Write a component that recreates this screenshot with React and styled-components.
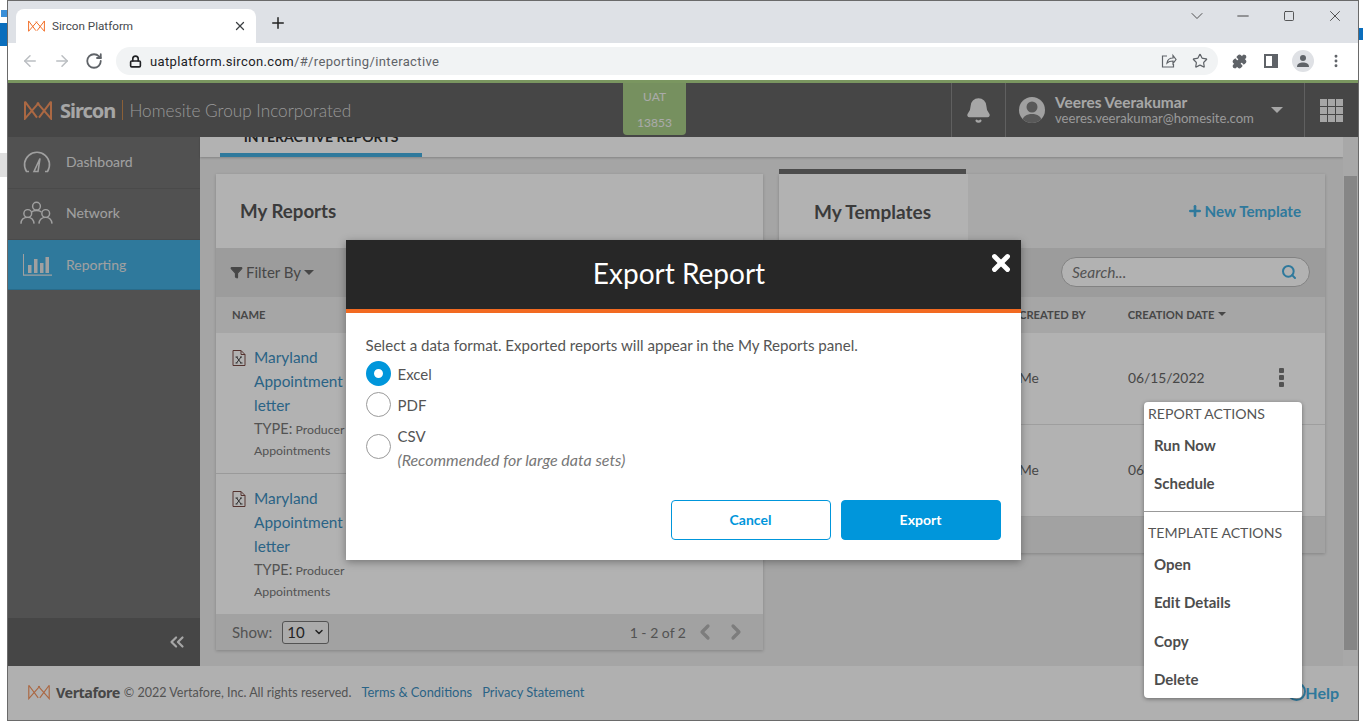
import React from "react";
import styled, { createGlobalStyle } from "styled-components";
import { ArrowLeft, ArrowRight, RotateCw, Lock, Star, Puzzle, MoreVertical, X, Plus, ChevronDown, Minus, Square, Search, ChevronLeft, ChevronRight, ChevronsLeft, Filter, Bell } from "lucide-react";

const Global = createGlobalStyle`
  html, body { margin: 0; padding: 0; background: #fff; overflow: hidden; }
  body { font-family: "Lato", "Noto Sans", sans-serif; }
  * { box-sizing: border-box; }
`;

const Desktop = styled.div`
  position: relative;
  width: 1366px;
  height: 728px;
  padding-left: 7px;
  overflow: hidden;
  background: #fff;
`;
const DesktopBit = styled.div`
  position: absolute;
  left: ${p => p.$x}px;
  top: ${p => p.$y}px;
  width: ${p => p.$w}px;
  height: ${p => p.$h}px;
  background: ${p => p.$c};
`;
const Win = styled.div`
  position: relative;
  width: 1352px;
  height: 721px;
  border: 1px solid #6a6a6a;
  display: flex;
  flex-direction: column;
  overflow: hidden;
  background: #fff;
`;
const TabStrip = styled.div`
  height: 42px;
  flex: none;
  background: #dee1e6;
  display: flex;
  align-items: flex-end;
  padding-left: 8px;
  color: #3c4043;
`;
const Tab = styled.div`
  width: 240px;
  height: 34px;
  background: #fff;
  border-radius: 8px 8px 0 0;
  display: flex;
  align-items: center;
  padding: 0 9px 0 12px;
  gap: 7px;
  font: 11.7px "Roboto", sans-serif;
  color: #45494d;
`;
const TabTitle = styled.span`
  flex: 1;
`;
const NewTab = styled.div`
  margin: 0 0 6px 13px;
  display: flex;
  align-items: center;
  height: 28px;
`;
const WinControls = styled.div`
  margin-left: auto;
  align-self: flex-start;
  display: flex;
  align-items: center;
  height: 30px;
  color: #333;
`;
const WinBtn = styled.div`
  width: 46px;
  display: flex;
  justify-content: center;
`;
const Toolbar = styled.div`
  height: 37px;
  flex: none;
  background: #fff;
  display: flex;
  align-items: center;
  padding: 0 8px 1px 13px;
  color: #5f6368;
`;
const NavIcons = styled.div`
  display: flex;
  align-items: center;
  gap: 14px;
  margin-right: 13px;
`;
const Omni = styled.div`
  width: 1102px;
  height: 28px;
  border-radius: 14px;
  background: #f1f3f4;
  display: flex;
  align-items: center;
  padding: 0 10px 0 13px;
  gap: 8px;
  font: 13px "Roboto", sans-serif;
  letter-spacing: .36px;
  color: #202124;
`;
const UrlHost = styled.span`
  color: #202124;
`;
const UrlPath = styled.span`
  color: #5f6368;
`;
const OmniRight = styled.div`
  margin-left: auto;
  display: flex;
  gap: 15px;
  align-items: center;
`;
const ExtIcons = styled.div`
  display: flex;
  align-items: center;
  gap: 14px;
  margin-left: 14px;
  color: #5f6368;
`;
const PuzzleIcon = styled(Puzzle)`
  margin-right: 3px;
`;
const ProfileDot = styled.div`
  width: 22px;
  height: 22px;
  border-radius: 50%;
  background: #dfe1e5;
  display: flex;
  align-items: center;
  justify-content: center;
`;
const GreenLine = styled.div`
  height: 3px;
  flex: none;
  background: #7a9660;
`;
const AppArea = styled.div`
  position: relative;
  flex: 1;
  min-height: 0;
  display: flex;
  flex-direction: column;
  overflow: hidden;
`;
const AppHeader = styled.header`
  position: relative;
  height: 54px;
  flex: none;
  background: #656565;
  display: flex;
  align-items: stretch;
  padding-left: 16px;
  color: #ddd;
`;
const Brand = styled.div`
  display: flex;
  align-items: center;
  gap: 5px;
  font-size: 17.2px;
  font-weight: 300;
  color: #d8d8d8;
`;
const BrandName = styled.span`
  font: 700 20px "Noto Sans", sans-serif;
  letter-spacing: -1px;
  color: #eee;
  margin-left: 3px;
`;
const BrandSep = styled.span`
  width: 1px;
  height: 20px;
  background: #c88a50;
  margin: 0 1px 0 2px;
`;
const UatBadge = styled.div`
  position: absolute;
  left: 615px;
  top: 0;
  width: 63px;
  height: 52px;
  background: #aacf88;
  border-radius: 0 0 4px 4px;
  display: flex;
  flex-direction: column;
  align-items: center;
  justify-content: space-between;
  padding: 6px 0 5px;
  font-size: 12px;
  color: #f4f4f4;
`;
const HeaderRight = styled.div`
  margin-left: auto;
  display: flex;
  align-items: stretch;
`;
const HeaderCell = styled.div`
  border-left: 1px solid #8a8a8a;
  display: flex;
  align-items: center;
  width: ${p => p.$w}px;
  justify-content: ${p => p.$center ? "center" : "flex-start"};
  padding-left: ${p => p.$pl || 0}px;
`;
const Avatar = styled.div`
  width: 26px;
  height: 26px;
  flex: none;
  border-radius: 50%;
  background: #e6e6e6;
  overflow: hidden;
`;
const UserInfo = styled.div`
  margin-left: 10px;
  display: flex;
  flex-direction: column;
  line-height: 16px;
`;
const UserName = styled.div`
  font-size: 15.4px;
  font-weight: 700;
  color: #f0f0f0;
`;
const UserMail = styled.div`
  font-size: 13.1px;
  color: #dcdcdc;
`;
const Caret = styled.span`
  display: inline-block;
  width: 0;
  height: 0;
  border-left: ${p => p.$s || 4}px solid transparent;
  border-right: ${p => p.$s || 4}px solid transparent;
  border-top: ${p => p.$s || 4}px solid ${p => p.$c || "#666"};
  margin-left: ${p => p.$m ?? 3}px;
`;
const Grid9 = styled.div`
  display: grid;
  grid-template-columns: repeat(3, 7px);
  grid-auto-rows: 7px;
  gap: 1px;
`;
const GridDot = styled.div`
  background: #eee;
`;
const Body = styled.div`
  flex: 1;
  min-height: 0;
  display: flex;
`;
const Sidebar = styled.nav`
  width: 192px;
  flex: none;
  background: #757575;
  display: flex;
  flex-direction: column;
`;
const NavItem = styled.div`
  height: ${p => p.$h}px;
  display: flex;
  align-items: center;
  padding: 0 0 ${p => p.$pb || 0}px 12px;
  gap: 13px;
  font-size: 14px;
  color: #e6e6e6;
  background: ${p => p.$active ? "#44aee0" : "transparent"};
  border-bottom: 1px solid ${p => p.$active ? "#3c9ac6" : "#6a6a6a"};
`;
const NavIconBox = styled.div`
  width: 33px;
  display: flex;
  justify-content: center;
  flex: none;
`;
const Collapse = styled.div`
  margin-top: auto;
  height: 48px;
  background: #656565;
  display: flex;
  align-items: center;
  justify-content: flex-end;
  padding-right: 12px;
  color: #eee;
`;
const Content = styled.main`
  flex: 1;
  min-width: 0;
  display: flex;
  background: #ececec;
`;
const ContentCol = styled.div`
  flex: 1;
  min-width: 0;
  display: flex;
  flex-direction: column;
`;
const Tabs = styled.div`
  height: 20px;
  flex: none;
  background: #fff;
  padding-left: 20px;
  display: flex;
  box-shadow: 0 1px 2px rgba(0,0,0,.2);
`;
const ActiveTab = styled.div`
  width: 202px;
  height: 20px;
  border-bottom: 4px solid #44aee0;
  overflow: hidden;
  display: flex;
  align-items: flex-end;
  justify-content: center;
  padding-bottom: 8px;
  font-size: 14px;
  font-weight: 700;
  line-height: 16px;
  color: #333;
`;
const Panels = styled.div`
  display: flex;
  gap: 16px;
  align-items: flex-start;
  padding: 17px 0 0 16px;
`;
const Card = styled.section`
  width: ${p => p.$w}px;
  background: #fff;
  box-shadow: 0 1px 3px rgba(0,0,0,.2);
  position: relative;
  flex: none;
`;
const CardHead = styled.div`
  height: 74px;
  display: flex;
  align-items: stretch;
  background: ${p => p.$tint ? "#f3f3f3" : "#fff"};
`;
const CardTitle = styled.h2`
  margin: 0;
  font-size: 18.7px;
  font-weight: 700;
  color: #555;
  display: flex;
  align-items: center;
  padding: 0 24px;
  line-height: 1;
`;
const TemplateTab = styled(CardTitle)`
  position: relative;
  width: 189px;
  font-size: 19px;
  padding: 0 0 0 35px;
  background: #fff;
  &::before {
    content: "";
    position: absolute;
    left: 0;
    right: 2px;
    top: -5px;
    height: 5px;
    background: #6d6d6d;
  }
`;
const NewTemplate = styled.div`
  margin-left: auto;
  display: flex;
  align-items: center;
  gap: 2px;
  padding: 0 24px 1px 0;
  font-size: 15.2px;
  font-weight: 700;
  color: #44aee0;
`;
const FilterBar = styled.div`
  height: 49px;
  background: #e0e0e0;
  display: flex;
  align-items: center;
  padding: 0 15px 1px 14px;
  font-size: 15px;
  color: #666;
  gap: 3px;
`;
const SearchBox = styled.div`
  margin-left: auto;
  width: 249px;
  height: 30px;
  border: 1px solid #bbb;
  border-radius: 15px;
  background: #fff;
  display: flex;
  align-items: center;
  justify-content: space-between;
  padding: 0 12px 0 10px;
  font-size: 15.5px;
  font-style: italic;
  color: #777;
`;
const THead = styled.div`
  height: 36px;
  background: #eeeeee;
  display: flex;
  align-items: center;
  padding-bottom: 2px;
  font-size: 11.2px;
  font-weight: 700;
  color: #666;
`;
const Th = styled.div`
  margin-left: ${p => p.$ml || 0}px;
  display: flex;
  align-items: center;
  white-space: nowrap;
`;
const ReportRow = styled.div`
  height: ${p => p.$h}px;
  display: flex;
  padding: 12px 0 0 16px;
  border-bottom: ${p => p.$last ? "none" : "1px solid #ddd"};
  gap: 8px;
`;
const DocIcon = styled.div`
  flex: none;
  margin-top: 5px;
`;
const ReportText = styled.div`
  width: 95px;
`;
const ReportName = styled.div`
  font-size: 15.4px;
  line-height: 24px;
  color: #3d8fc0;
`;
const ReportType = styled.div`
  margin-top: 1px;
  line-height: 21px;
  color: #777;
  font-size: 12.3px;
`;
const TypeLabel = styled.span`
  font-size: 14.5px;
`;
const TemplateRow = styled.div`
  height: ${p => p.$h}px;
  display: flex;
  align-items: center;
  padding: 0 0 2px 240px;
  border-bottom: 1px solid #e2e2e2;
  font-size: 13.8px;
  color: #666;
`;
const DateCell = styled.div`
  margin-left: 89px;
  width: 151px;
`;
const Dots = styled.div`
  display: flex;
  flex-direction: column;
  gap: 2px;
`;
const Dot = styled.div`
  width: 5px;
  height: 5px;
  background: #777;
  border-radius: 1px;
`;
const CardFoot = styled.div`
  height: 36px;
  background: #e8e8e8;
  display: flex;
  align-items: center;
  padding: 0 15px 0 16px;
  font-size: 15px;
  color: #777;
`;
const PageSelect = styled.div`
  width: 47px;
  height: 23px;
  margin-left: 10px;
  border: 1px solid #777;
  border-radius: 3px;
  background: #f5f5f5;
  display: flex;
  align-items: center;
  justify-content: space-between;
  padding: 0 3px 0 4px;
  color: #333;
`;
const Pager = styled.div`
  margin-left: auto;
  display: flex;
  align-items: center;
  gap: 7px;
  font-size: 14px;
`;
const Scrollbar = styled.div`
  width: 15px;
  flex: none;
  background: #f1f1f1;
  display: flex;
  flex-direction: column;
  align-items: center;
  padding-top: 39px;
  padding-bottom: 16px;
`;
const ScrollThumb = styled.div`
  width: 13px;
  flex: 1;
  background: #c1c1c1;
`;
const Footer = styled.footer`
  height: 54px;
  flex: none;
  background: #fdfdfd;
  display: flex;
  align-items: center;
  padding: 0 0 2px 20px;
  font-size: 13px;
  color: #777;
`;
const FootBrand = styled.span`
  font: 700 14.4px "Noto Sans", sans-serif;
  letter-spacing: -.5px;
  color: #666;
  margin-left: 6px;
`;
const Copy = styled.span`
  margin-left: 4px;
  font-size: 12.55px;
`;
const FootLink = styled.span`
  color: #3d8fc0;
  margin-left: ${p => p.$ml}px;
  font-size: 12.9px;
`;
const HelpLink = styled.span`
  position: relative;
  margin-left: auto;
  margin-right: 19px;
  font-size: 16px;
  font-weight: 700;
  color: #44aee0;
  &::before {
    content: "";
    position: absolute;
    left: -18px;
    top: -1px;
    width: 15px;
    height: 15px;
    border: 2px solid #44aee0;
    border-radius: 50%;
  }
`;
const Overlay = styled.div`
  position: absolute;
  inset: 0;
  padding-bottom: 4px;
  background: rgba(0,0,0,.3);
  display: flex;
  align-items: center;
  justify-content: center;
`;
const Dialog = styled.div`
  position: relative;
  width: 675px;
  height: 320px;
  background: #fff;
  box-shadow: 0 2px 8px rgba(0,0,0,.35);
  display: flex;
  flex-direction: column;
`;
const DialogHead = styled.div`
  height: 73px;
  flex: none;
  background: #272727;
  border-bottom: 4px solid #f26a21;
  color: #fff;
  font-size: 28px;
  padding: 0 8px 3px 0;
  display: flex;
  align-items: center;
  justify-content: center;
`;
const CloseBtn = styled.div`
  position: absolute;
  right: 7px;
  top: 10px;
  color: #fff;
  display: flex;
`;
const DialogBody = styled.div`
  flex: 1;
  padding: 22px 20px 20px;
  display: flex;
  flex-direction: column;
  font-size: 15px;
  color: #555;
`;
const Prompt = styled.div`
  line-height: 20px;
  font-size: 15.1px;
  margin-bottom: 3px;
`;
const RadioRow = styled.label`
  display: flex;
  align-items: center;
  gap: 7px;
  height: ${p => p.$h || 31}px;
`;
const OptionText = styled.span`
  padding-top: 2px;
`;
const Radio = styled.span`
  width: 25px;
  height: 25px;
  border-radius: 50%;
  flex: none;
  border: ${p => p.$on ? "8px solid #0096db" : "1px solid #9a9a9a"};
  background: #fff;
`;
const RadioText = styled.div`
  line-height: 24px;
  padding: 0 0 2px;
`;
const Hint = styled.div`
  font-style: italic;
  font-size: 16px;
  color: #777;
`;
const Buttons = styled.div`
  margin-top: auto;
  display: flex;
  justify-content: flex-end;
  gap: 10px;
`;
const Btn = styled.button`
  width: 160px;
  height: 40px;
  border-radius: 4px;
  border: 1px solid #0096db;
  background: ${p => p.$primary ? "#0096db" : "#fff"};
  color: ${p => p.$primary ? "#fff" : "#0096db"};
  font: 700 14px "Lato", sans-serif;
`;
const Menu = styled.div`
  position: absolute;
  left: 1136px;
  top: 319px;
  width: 158px;
  height: 296px;
  background: #fff;
  border-radius: 4px;
  box-shadow: 0 1px 4px rgba(0,0,0,.4);
  color: #555;
`;
const MenuLabel = styled.div`
  padding-left: 4px;
  font-size: 14.1px;
  line-height: 24px;
  margin-top: ${p => p.$mt || 0}px;
`;
const MenuItem = styled.div`
  padding-left: 10px;
  font-size: 15px;
  font-weight: 700;
  color: #4d4d4d;
  line-height: 20px;
  margin-top: ${p => p.$mt}px;
`;
const MenuRule = styled.div`
  height: 1px;
  background: #999;
  margin-top: 18px;
`;

const Logo = ({ size = 28, color = "#f59560", stroke = 2 }) => (
  <svg width={size} height={size * 0.72} viewBox="0 0 28 20" fill="none" stroke={color} strokeWidth={stroke}>
    <path d="M1 1.500v17L15 2.500M1 1.500l12 16M27 1.500v17L13 2.500M27 1.500l-12 16" />
  </svg>
);
const Gauge = () => (
  <svg width="28" height="24" viewBox="0 0 28 24" fill="none" stroke="#e6e6e6" strokeWidth="1.6">
    <path d="M6 21.500H3.500A12.500 12.500 0 1 1 24.500 21.500H22M11 21.500l6-13-2 13z" />
  </svg>
);
const People = () => (
  <svg width="34" height="24" viewBox="0 0 34 24" fill="none" stroke="#e6e6e6" strokeWidth="1.500">
    <circle cx="17" cy="5" r="4" /><circle cx="8" cy="12.500" r="4" /><circle cx="26.500" cy="12.500" r="4" />
    <path d="M1 23c0-5 3-6.500 7-6.500s6 1.500 6.500 6.500M19.500 23c.5-5 3-6.500 7-6.500s6 1.500 6.500 6.500M12 11c1-1 3-1.500 5-1.500s4 .5 5 1.500" />
  </svg>
);
const Bars = () => (
  <svg width="30" height="22" viewBox="0 0 30 22" fill="#e6e6e6">
    <path d="M1 0h1v20.500h28v1.200H1zM6 11h3.500v8H6zM12 5h3.500v14H12zM18 9h3.500v10H18zM23.500 3H27v16h-3.500z" />
  </svg>
);
const Doc = () => (
  <svg width="14" height="16" viewBox="0 0 14 16" fill="none" stroke="#7a4a44" strokeWidth="1">
    <path d="M1 .5h8l4 4v11H1zM9 .5v4h4" />
    <path d="M4.500 7l4.500 6M9 7l-4.500 6M3.500 7h2.500M8 7h2M3.500 13h2M8 13h2.500" stroke="#444" />
  </svg>
);
const Share = () => (
  <svg width="16" height="16" viewBox="0 0 16 16" fill="none" stroke="#5f6368" strokeWidth="1.200">
    <path d="M6 3H1.500v11h11v-3M6 10c.5-3.500 3-5 6-5V2.500l3 4-3 4V8c-2.500 0-4.500.5-6 2z" />
  </svg>
);
const SidePanel = () => (
  <svg width="14" height="14" viewBox="0 0 14 14">
    <path d="M0 0h14v14H0zM2 2v10h6V2z" fill="#5f6368" fillRule="evenodd" />
  </svg>
);
const PersonIcon = () => (
  <svg width="14" height="14" viewBox="0 0 14 14" fill="#5f6368">
    <circle cx="7" cy="4" r="3" /><path d="M1 13c0-3.500 3-4.500 6-4.500s6 1 6 4.500z" />
  </svg>
);
const AvatarArt = () => (
  <svg width="26" height="26" viewBox="0 0 26 26" fill="#7f7f7f">
    <circle cx="13" cy="10" r="5.500" /><path d="M3 26c0-7 5-9 10-9s10 2 10 9z" />
  </svg>
);

const Reports = () => (
  <Card $w={547}>
    <CardHead><CardTitle>My Reports</CardTitle></CardHead>
    <FilterBar><Filter size={13} fill="#666" stroke="#666" /> Filter By <Caret $s={5} $m={0} /></FilterBar>
    <THead><Th $ml={16}>NAME</Th></THead>
    {[141, 140].map((h, i) => (
      <ReportRow key={i} $h={h} $last={i === 1}>
        <DocIcon><Doc /></DocIcon>
        <ReportText>
          <ReportName>Maryland Appointment letter</ReportName>
          <ReportType><TypeLabel>TYPE:</TypeLabel> Producer Appointments</ReportType>
        </ReportText>
      </ReportRow>
    ))}
    <CardFoot>
      Show:
      <PageSelect>10 <ChevronDown size={12} strokeWidth={3} /></PageSelect>
      <Pager>1 - 2 of 2 <ChevronLeft size={24} strokeWidth={3.2} color="#b3b3b3" /><ChevronRight size={24} strokeWidth={3.2} color="#b3b3b3" /></Pager>
    </CardFoot>
  </Card>
);

const Templates = () => (
  <Card $w={546}>
    <CardHead $tint>
      <TemplateTab>My Templates</TemplateTab>
      <NewTemplate><Plus size={16} strokeWidth={4} /> New Template</NewTemplate>
    </CardHead>
    <FilterBar><SearchBox>Search...<Search size={16} strokeWidth={3} color="#44aee0" /></SearchBox></FilterBar>
    <THead>
      <Th $ml={240}>CREATED BY</Th>
      <Th $ml={42}>CREATION DATE<Caret $c="#666" /></Th>
    </THead>
    <TemplateRow $h={92}>
      Me<DateCell>06/15/2022</DateCell>
      <Dots><Dot /><Dot /><Dot /></Dots>
    </TemplateRow>
    <TemplateRow $h={92}>
      Me<DateCell>06/15/2022</DateCell>
    </TemplateRow>
    <CardFoot />
  </Card>
);

export default function App() {
  return (
    <Desktop>
      <Global />
      <DesktopBit $x={0} $y={23} $w={7} $h={23} $c="#0a6ebd" />
      <DesktopBit $x={1} $y={10} $w={6} $h={7} $c="#3a8fd8" />
      <DesktopBit $x={0} $y={153} $w={7} $h={24} $c="#dedede" />
      <DesktopBit $x={1359} $y={28} $w={4} $h={12} $c="#0a6ebd" />
      <Win>
        <TabStrip>
          <Tab>
            <Logo size={17} color="#f26a21" stroke={1.6} />
            <TabTitle>Sircon Platform</TabTitle>
            <X size={14} strokeWidth={2.2} color="#3c4043" />
          </Tab>
          <NewTab><Plus size={18} strokeWidth={2} color="#222" /></NewTab>
          <WinControls>
            <WinBtn><ChevronDown size={20} strokeWidth={1} /></WinBtn>
            <WinBtn><Minus size={18} strokeWidth={1.2} /></WinBtn>
            <WinBtn><Square size={12} strokeWidth={1.6} /></WinBtn>
            <WinBtn><X size={18} strokeWidth={1.1} /></WinBtn>
          </WinControls>
        </TabStrip>
        <Toolbar>
          <NavIcons>
            <ArrowLeft size={18} color="#bbbec2" />
            <ArrowRight size={18} color="#bbbec2" />
            <RotateCw size={18} strokeWidth={2.4} color="#5f6368" />
          </NavIcons>
          <Omni>
            <Lock size={13} strokeWidth={3} />
            <span><UrlHost>uatplatform.sircon.com</UrlHost><UrlPath>/#/reporting/interactive</UrlPath></span>
            <OmniRight>
              <Share />
              <Star size={16} strokeWidth={1.8} color="#5f6368" />
            </OmniRight>
          </Omni>
          <ExtIcons>
            <PuzzleIcon size={15} fill="#5f6368" />
            <SidePanel />
            <ProfileDot><PersonIcon /></ProfileDot>
            <MoreVertical size={16} strokeWidth={2.4} />
          </ExtIcons>
        </Toolbar>
        <GreenLine />
        <AppArea>
          <AppHeader>
            <Brand>
              <Logo />
              <BrandName>Sircon</BrandName>
              <BrandSep />
              Homesite Group Incorporated
            </Brand>
            <UatBadge><span>UAT</span><span>13853</span></UatBadge>
            <HeaderRight>
              <HeaderCell $w={54} $center><Bell size={27} fill="#eee" stroke="#eee" /></HeaderCell>
              <HeaderCell $w={299} $pl={13}>
                <Avatar><AvatarArt /></Avatar>
                <UserInfo>
                  <UserName>Veeres Veerakumar</UserName>
                  <UserMail>veeres.veerakumar@homesite.com</UserMail>
                </UserInfo>
                <Caret $s={6} $c="#eee" $m={17} />
              </HeaderCell>
              <HeaderCell $w={54} $center>
                <Grid9>{Array.from({ length: 9 }).map((_, i) => <GridDot key={i} />)}</Grid9>
              </HeaderCell>
            </HeaderRight>
          </AppHeader>
          <Body>
            <Sidebar>
              <NavItem $h={52} $pb={2}><NavIconBox><Gauge /></NavIconBox>Dashboard</NavItem>
              <NavItem $h={51} $pb={3}><NavIconBox><People /></NavIconBox>Network</NavItem>
              <NavItem $h={50} $active><NavIconBox><Bars /></NavIconBox>Reporting</NavItem>
              <Collapse><ChevronsLeft size={22} strokeWidth={2.4} /></Collapse>
            </Sidebar>
            <Content>
              <ContentCol>
                <Tabs><ActiveTab>INTERACTIVE REPORTS</ActiveTab></Tabs>
                <Panels>
                  <Reports />
                  <Templates />
                </Panels>
              </ContentCol>
              <Scrollbar><ScrollThumb /></Scrollbar>
            </Content>
          </Body>
          <Footer>
            <Logo size={22} stroke={1.5} />
            <FootBrand>Vertafore</FootBrand>
            <Copy>© 2022 Vertafore, Inc. All rights reserved.</Copy>
            <FootLink $ml={10}>Terms &amp; Conditions</FootLink>
            <FootLink $ml={10}>Privacy Statement</FootLink>
            <HelpLink>Help</HelpLink>
          </Footer>
          <Overlay>
            <Dialog>
              <DialogHead>Export Report</DialogHead>
              <CloseBtn><X size={26} strokeWidth={4.5} /></CloseBtn>
              <DialogBody>
                <Prompt>Select a data format. Exported reports will appear in the My Reports panel.</Prompt>
                <RadioRow><Radio $on /><OptionText>Excel</OptionText></RadioRow>
                <RadioRow><Radio /><OptionText>PDF</OptionText></RadioRow>
                <RadioRow $h={53}><Radio /><div><RadioText>CSV</RadioText><Hint>(Recommended for large data sets)</Hint></div></RadioRow>
                <Buttons><Btn>Cancel</Btn><Btn $primary>Export</Btn></Buttons>
              </DialogBody>
            </Dialog>
          </Overlay>
          <Menu>
            <MenuLabel>REPORT ACTIONS</MenuLabel>
            <MenuItem $mt={9}>Run Now</MenuItem>
            <MenuItem $mt={18}>Schedule</MenuItem>
            <MenuRule />
            <MenuLabel $mt={9}>TEMPLATE ACTIONS</MenuLabel>
            <MenuItem $mt={9}>Open</MenuItem>
            <MenuItem $mt={18}>Edit Details</MenuItem>
            <MenuItem $mt={19}>Copy</MenuItem>
            <MenuItem $mt={18}>Delete</MenuItem>
          </Menu>
        </AppArea>
      </Win>
    </Desktop>
  );
}
